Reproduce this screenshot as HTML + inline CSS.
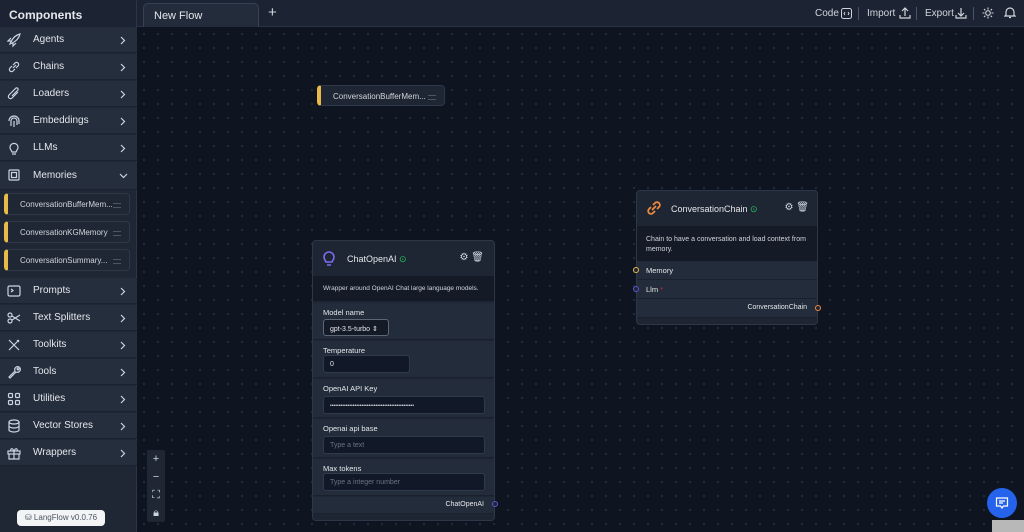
<!DOCTYPE html>
<html><head><meta charset="utf-8"><style>
*{box-sizing:border-box;margin:0;padding:0}
body{width:1024px;height:532px;overflow:hidden;background:#0f1421;font-family:"Liberation Sans",sans-serif;color:#e5e7eb;position:relative}
.top{position:absolute;left:0;top:0;width:1024px;height:27px;background:#1c2433;border-bottom:1px solid #2a3444}
.canvas{position:absolute;left:137px;top:27px;right:0;bottom:0;background-color:#0f1421;background-image:radial-gradient(#2a3140 0.8px,transparent 1px);background-size:14px 14px}
.side{position:absolute;left:0;top:0;width:137px;height:532px;background:#1f2735;border-right:1px solid #2c3646}
.side h1{font-size:12px;font-weight:bold;padding:8px 0 0 9px;height:27px;background:#1c2433}
.row{position:absolute;left:0;width:137px;height:26px;background:#252e3d;border-bottom:1px solid #1b2230;font-size:10px;color:#e5e7eb}
.row svg.ic{position:absolute;left:6px;top:5px}
.row span{position:absolute;left:33px;top:7px}
.row svg.ch{position:absolute;right:11px;top:9px}
.mem{position:absolute;left:4px;width:126px;height:22px;border:1px solid #2e3848;border-left:4px solid #e9b949;border-radius:4px;background:#1f2735;font-size:8px;color:#d1d5db;padding:6px 0 0 12px}
.mem:after{content:"";position:absolute;right:8px;top:9px;width:8px;height:3px;border-top:1px solid #4b5563;border-bottom:1px solid #4b5563}
.node{position:absolute;background:#1e2633;border:1px solid #2d3747;border-radius:4px}
.fld{position:absolute;left:0;right:0;background:#232c3a;border-bottom:1px solid #1a212d;font-size:7.5px;color:#e5e7eb}
.inp{position:absolute;background:#111827;border:1px solid #2f3a4b;border-radius:3px;font-size:7px;color:#6b7280;padding:5px 6px}
.dot{position:absolute;width:6px;height:6px;border-radius:50%;border:1.3px solid}
.tb{position:absolute;top:8px;font-size:10px;color:#d1d5db}
.sep{position:absolute;top:7px;width:1px;height:13px;background:#4b5563}
</style></head><body>
<div class="top">
 <div style="position:absolute;left:143px;top:3px;width:116px;height:24px;background:#232c3b;border:1px solid #364154;border-bottom:none;border-radius:5px 5px 0 0;font-size:11px;padding:6px 10px;color:#e5e7eb">New Flow</div>
 <div style="position:absolute;left:268px;top:4px;font-size:15px;color:#d1d5db">+</div>
 <div class="tb" style="left:815px">Code</div>
 <svg style="position:absolute;left:841px;top:8px" width="11" height="11" fill="none" stroke="#d1d5db"><rect x="0.5" y="0.5" width="10" height="10" rx="2"/><path d="M4 4l-1 1.5L4 7M7 4l1 1.5L7 7"/></svg>
 <div class="sep" style="left:858px"></div>
 <div class="tb" style="left:867px">Import</div>
 <svg style="position:absolute;left:899px;top:6px" width="12" height="14" fill="none" stroke="#d1d5db" stroke-width="1.2"><path d="M6 10V2M3 5l3-3 3 3M1 9v3h10V9"/></svg>
 <div class="sep" style="left:916px"></div>
 <div class="tb" style="left:925px">Export</div>
 <svg style="position:absolute;left:955px;top:6px" width="12" height="14" fill="none" stroke="#d1d5db" stroke-width="1.2"><path d="M6 2v8M3 7l3 3 3-3M1 9v3h10V9"/></svg>
 <div class="sep" style="left:973px"></div>
 <svg style="position:absolute;left:982px;top:7px" width="12" height="12" fill="none" stroke="#d1d5db" stroke-width="1.1"><circle cx="6" cy="6" r="2.3"/><path d="M6 0.5v2M6 9.5v2M0.5 6h2M9.5 6h2M2 2l1.3 1.3M8.7 8.7L10 10M2 10l1.3-1.3M8.7 3.3L10 2"/></svg>
 <svg style="position:absolute;left:1004px;top:6px" width="12" height="13" fill="none" stroke="#d1d5db" stroke-width="1.2"><path d="M2 9V6a4 4 0 018 0v3l1 1H1zM5 11.5h2"/></svg>
</div>
<div class="canvas"></div>
<svg width="0" height="0" style="position:absolute"><defs><path id="chv" d="M1 1l3.5 3.5L1 8" fill="none" stroke="#cbd5e1" stroke-width="1.2"/></defs></svg>
<div class="side">
 <h1>Components</h1>
 <div class="row" style="top:27px"><svg class="ic" width="16" height="16" fill="none" stroke="#cbd5e1" stroke-width="1.2"><path d="M4 12c3-7 6-9 10-10-1 4-3 7-10 10zM5 9l-3 0 3-3M7 11l0 3 3-3"/></svg><span>Agents</span><svg class="ch" width="6" height="9"><use href="#chv"/></svg></div>
 <div class="row" style="top:54px"><svg class="ic" width="16" height="16" fill="none" stroke="#cbd5e1" stroke-width="1.2"><path d="M7 9l3-3M6 7L4 9a2 2 0 003 3l2-2M10 9l2-2a2 2 0 00-3-3L7 6"/></svg><span>Chains</span><svg class="ch" width="6" height="9"><use href="#chv"/></svg></div>
 <div class="row" style="top:81px"><svg class="ic" width="16" height="16" fill="none" stroke="#cbd5e1" stroke-width="1.2"><path d="M12 6l-6 6a2 2 0 01-3-3l7-7a1.5 1.5 0 012 2L6 10"/></svg><span>Loaders</span><svg class="ch" width="6" height="9"><use href="#chv"/></svg></div>
 <div class="row" style="top:108px"><svg class="ic" width="16" height="16" fill="none" stroke="#cbd5e1" stroke-width="1.2"><path d="M3 8a5 5 0 0110 0v3M5 13V8a3 3 0 016 0v4M8 8v6"/></svg><span>Embeddings</span><svg class="ch" width="6" height="9"><use href="#chv"/></svg></div>
 <div class="row" style="top:135px"><svg class="ic" width="16" height="16" fill="none" stroke="#cbd5e1" stroke-width="1.2"><path d="M5 10a4 4 0 116 0l-1 2H6zM6 14h4"/></svg><span>LLMs</span><svg class="ch" width="6" height="9"><use href="#chv"/></svg></div>
 <div class="row" style="top:162px;height:28px"><svg class="ic" width="16" height="16" fill="none" stroke="#cbd5e1" stroke-width="1.2"><rect x="3" y="3" width="10" height="10" rx="1"/><rect x="5.5" y="5.5" width="5" height="5"/></svg><span style="top:8px">Memories</span><svg style="position:absolute;right:9px;top:11px" width="9" height="6"><path d="M1 1l3.5 3.5L8 1" fill="none" stroke="#cbd5e1" stroke-width="1.2"/></svg></div>
 <div class="mem" style="top:193px">ConversationBufferMem...</div>
 <div class="mem" style="top:221px">ConversationKGMemory</div>
 <div class="mem" style="top:249px">ConversationSummary...</div>
 <div class="row" style="top:278px"><svg class="ic" width="16" height="16" fill="none" stroke="#cbd5e1" stroke-width="1.2"><rect x="2" y="3" width="12" height="10" rx="1.5"/><path d="M5 6l2 1.5L5 9"/></svg><span>Prompts</span><svg class="ch" width="6" height="9"><use href="#chv"/></svg></div>
 <div class="row" style="top:305px"><svg class="ic" width="16" height="16" fill="none" stroke="#cbd5e1" stroke-width="1.2"><circle cx="4" cy="5" r="2"/><circle cx="4" cy="11" r="2"/><path d="M6 6l8 5M6 10l8-5"/></svg><span>Text Splitters</span><svg class="ch" width="6" height="9"><use href="#chv"/></svg></div>
 <div class="row" style="top:332px"><svg class="ic" width="16" height="16" fill="none" stroke="#cbd5e1" stroke-width="1.2"><path d="M3 3l10 10M13 3L3 13M11 3l2 2"/></svg><span>Toolkits</span><svg class="ch" width="6" height="9"><use href="#chv"/></svg></div>
 <div class="row" style="top:359px"><svg class="ic" width="16" height="16" fill="none" stroke="#cbd5e1" stroke-width="1.2"><path d="M3 13l6-6a3 3 0 014-4l-2 2 1 1 2-2a3 3 0 01-4 4l-6 6z"/></svg><span>Tools</span><svg class="ch" width="6" height="9"><use href="#chv"/></svg></div>
 <div class="row" style="top:386px"><svg class="ic" width="16" height="16" fill="none" stroke="#cbd5e1" stroke-width="1.2"><rect x="2.5" y="2.5" width="4" height="4" rx="1"/><rect x="9.5" y="2.5" width="4" height="4" rx="1"/><rect x="2.5" y="9.5" width="4" height="4" rx="1"/><rect x="9.5" y="9.5" width="4" height="4" rx="1"/></svg><span>Utilities</span><svg class="ch" width="6" height="9"><use href="#chv"/></svg></div>
 <div class="row" style="top:413px"><svg class="ic" width="16" height="16" fill="none" stroke="#cbd5e1" stroke-width="1.2"><ellipse cx="8" cy="4" rx="5" ry="2"/><path d="M3 4v8c0 1 2 2 5 2s5-1 5-2V4M3 8c0 1 2 2 5 2s5-1 5-2"/></svg><span>Vector Stores</span><svg class="ch" width="6" height="9"><use href="#chv"/></svg></div>
 <div class="row" style="top:440px"><svg class="ic" width="16" height="16" fill="none" stroke="#cbd5e1" stroke-width="1.2"><rect x="2" y="6" width="12" height="3"/><path d="M3 9v5h10V9M8 6v8M8 6C6 2 4 4 5 6M8 6c2-4 4-2 3 0"/></svg><span>Wrappers</span><svg class="ch" width="6" height="9"><use href="#chv"/></svg></div>
 <div style="position:absolute;left:17px;top:510px;width:88px;height:16px;background:#f3f4f6;border-radius:4px;font-size:8px;color:#4b5563;padding:3px 0 0 8px">⛁ LangFlow v0.0.76</div>
</div>
<div style="position:absolute;left:147px;top:450px;width:18px;height:72px;background:#1f2735;border-radius:2px;color:#cbd5e1;font-size:11px;text-align:center;line-height:18px">+<br>−<br>⛶<br>🔒︎</div>
<div class="mem" style="left:317px;top:85px;width:128px;height:21px;background:#1e2633;font-size:8px;color:#d1d5db">ConversationBufferMem...</div>
<div class="node" style="left:312px;top:240px;width:183px;height:281px">
 <svg style="position:absolute;left:8px;top:8px" width="16" height="18" fill="none" stroke="#7c6cf0" stroke-width="1.6"><path d="M4 11a5 5 0 118 0l-1 2H5zM6 16h4"/></svg>
 <div style="position:absolute;left:34px;top:13px;font-size:9px">ChatOpenAI <span style="color:#22c55e">⊙</span></div>
 <div style="position:absolute;right:10px;top:11px;font-size:10px;color:#cbd5e1">⚙︎ 🗑︎</div>
 <div style="position:absolute;left:0;right:0;top:35px;height:25px;background:#141b27;font-size:6.5px;color:#d1d5db;padding:9px 10px;white-space:nowrap">Wrapper around OpenAI Chat large language models.</div>
 <div class="fld" style="top:62px;height:37px"><div style="position:absolute;left:10px;top:5px">Model name</div><div class="inp" style="left:10px;top:16px;width:66px;height:17px;color:#e5e7eb;background:#141b27;border-color:#5b6677">gpt-3.5-turbo ⇕</div></div>
 <div class="fld" style="top:100px;height:37px"><div style="position:absolute;left:10px;top:5px">Temperature</div><div class="inp" style="left:10px;top:14px;width:87px;height:18px;color:#e5e7eb">0</div></div>
 <div class="fld" style="top:138px;height:39px"><div style="position:absolute;left:10px;top:5px">OpenAI API Key</div><div class="inp" style="left:10px;top:17px;width:162px;height:18px;color:#e5e7eb;font-size:5px;padding-top:6px">••••••••••••••••••••••••••••••••••••••••••••••••</div></div>
 <div class="fld" style="top:178px;height:39px"><div style="position:absolute;left:10px;top:5px">Openai api base</div><div class="inp" style="left:10px;top:17px;width:162px;height:18px">Type a text</div></div>
 <div class="fld" style="top:218px;height:37px"><div style="position:absolute;left:10px;top:5px">Max tokens</div><div class="inp" style="left:10px;top:14px;width:162px;height:18px">Type a integer number</div></div>
 <div class="fld" style="top:256px;height:17px"><div style="position:absolute;right:10px;top:4px;font-size:7px">ChatOpenAI</div></div>
 <div class="dot" style="right:-4px;top:260px;border-color:#5b54d6;background:#1e2633"></div>
</div>
<div class="node" style="left:636px;top:190px;width:182px;height:135px">
 <svg style="position:absolute;left:9px;top:9px" width="16" height="16" fill="none" stroke="#f0883e" stroke-width="1.8"><path d="M6 10l4-4M5 7L3 9a2.5 2.5 0 004 4l2-2M11 9l2-2a2.5 2.5 0 00-4-4L7 5"/></svg>
 <div style="position:absolute;left:34px;top:13px;font-size:9px">ConversationChain <span style="color:#22c55e">⊙</span></div>
 <div style="position:absolute;right:8px;top:11px;font-size:10px;color:#cbd5e1">⚙︎ 🗑︎</div>
 <div style="position:absolute;left:0;right:0;top:35px;height:35px;background:#141b27;font-size:7px;color:#d1d5db;padding:9px 9px;line-height:10px">Chain to have a conversation and load context from memory.</div>
 <div class="fld" style="top:70px;height:19px"><div style="position:absolute;left:9px;top:5px">Memory</div></div>
 <div class="fld" style="top:89px;height:19px"><div style="position:absolute;left:9px;top:5px">Llm <span style="color:#e11d48">*</span></div></div>
 <div class="fld" style="top:108px;height:19px"><div style="position:absolute;right:10px;top:5px;font-size:7px">ConversationChain</div></div>
 <div class="dot" style="left:-4px;top:76px;border-color:#e9b949;background:#1e2633"></div>
 <div class="dot" style="left:-4px;top:95px;border-color:#5b54d6;background:#1e2633"></div>
 <div class="dot" style="right:-4px;top:114px;border-color:#f0883e;background:#1e2633"></div>
</div>
<div style="position:absolute;left:992px;top:520px;width:32px;height:12px;background:#b8b8b8"></div>
<div style="position:absolute;left:987px;top:488px;width:30px;height:30px;border-radius:50%;background:#2563eb">
 <svg style="position:absolute;left:8px;top:8px" width="14" height="14" fill="none" stroke="#fff" stroke-width="1.2"><path d="M1.5 2h11v8h-4l-1.5 2-1.5-2h-4z M4 5h6M4 7h4"/></svg>
</div>
</body></html>
